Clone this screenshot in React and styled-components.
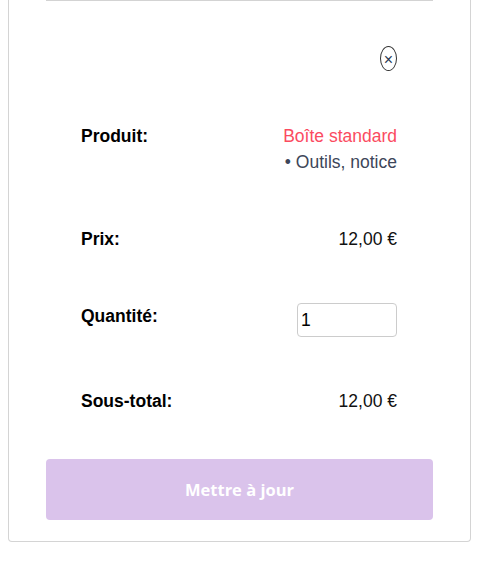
import React from 'react'
import styled, { createGlobalStyle } from 'styled-components'

const Global = createGlobalStyle`
body {
    margin: 0;
    background: #fff;
    font-family: "Liberation Sans", Arial, sans-serif;
}
`

function App() {
    return (
        <>
        <Global />
        <Card>
            <Divider />
            <CloseRow>
                <CloseBtn aria-label="Supprimer">×</CloseBtn>
            </CloseRow>
            <Row>
                <Label>Produit:</Label>
                <Value>
                    <Product>Boîte standard</Product>
                    <Option>• Outils, notice</Option>
                </Value>
            </Row>
            <Row>
                <Label>Prix:</Label>
                <Value>12,00 €</Value>
            </Row>
            <Row>
                <Label>Quantité:</Label>
                <Qty defaultValue="1" />
            </Row>
            <Row>
                <Label>Sous-total:</Label>
                <Value>12,00 €</Value>
            </Row>
            <Update>Mettre à jour</Update>
        </Card>
        </>
    )
}

export default App

const Card = styled.div`
margin-left: 8px;
width: 463px;
box-sizing: border-box;
padding: 0 37px 21px;
border: 1px solid #d4d4d4;
border-top: none;
border-radius: 0 0 4px 4px;
display: flex;
flex-direction: column;
`
const Divider = styled.div`
height: 1px;
background-color: #d3d3d3;
`
const CloseRow = styled.div`
display: flex;
justify-content: flex-end;
padding: 45px 36px 0;
height: 52px;
`
const CloseBtn = styled.button`
width: 17px;
height: 25px;
padding: 3px 0 0;
border: 1px solid #333;
border-radius: 50%;
background: #fff;
color: #2b3a55;
font-family: "Liberation Sans", Arial, sans-serif;
font-size: 16px;
line-height: 1;
box-sizing: border-box;
`
const Row = styled.div`
display: flex;
justify-content: space-between;
align-items: flex-start;
padding: 25px 36px 26px 35px;
font-size: 17.5px;
line-height: 26px;
`
const Label = styled.span`
font-weight: 700;
color: #000;
`
const Value = styled.div`
text-align: right;
color: #111;
`
const Product = styled.div`
color: #fb4b5f;
`
const Option = styled.div`
color: #3d4659;
`
const Qty = styled.input.attrs(() => ({
    type: "text",
}))`
width: 100px;
height: 34px;
box-sizing: border-box;
padding: 0 3px;
border: 1px solid #ccc;
border-radius: 4px;
font-family: "Liberation Sans", Arial, sans-serif;
font-size: 17.5px;
color: #000;
`
const Update = styled.button`
margin-top: 19px;
height: 61px;
border: none;
border-radius: 4px;
background-color: #dac3eb;
color: #fff;
font-family: "Open Sans", sans-serif;
font-weight: 700;
font-size: 16.5px;
`
